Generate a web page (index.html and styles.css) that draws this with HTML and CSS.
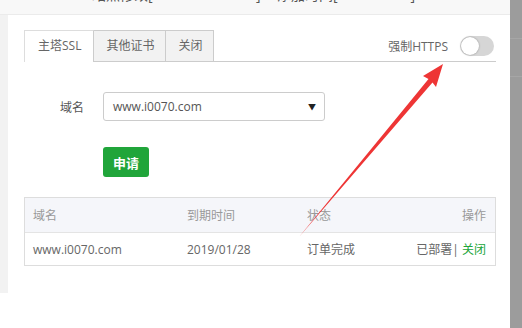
FILE: index.html
```html
<!DOCTYPE html>
<html lang="zh-cn">

<head>
   <meta charset="UTF-8">
   <title>站点修改</title>
   <link rel="stylesheet" href="styles.css">
</head>

<body>
   <div class="janela">
      <div class="conteudo">
         <div class="titulo"><span>站点修改[www.i0070.com] -- 添加时间[2019-01-01]</span></div>
         <div class="corpo">
            <div class="lateral"></div>
            <div class="painel">
               <div class="abas">
                  <span class="aba ativa">主塔SSL</span>
                  <span class="aba">其他证书</span>
                  <span class="aba">关闭</span>
                  <div class="forcar">
                     <span>强制HTTPS</span>
                     <span class="chave"><i></i></span>
                  </div>
               </div>

               <div class="linha">
                  <label>域名</label>
                  <div class="seletor">
                     <span>www.i0070.com</span>
                     <b>▼</b>
                  </div>
               </div>

               <button class="aplicar">申请</button>

               <div class="tabela">
                  <div class="cab">
                     <span>域名</span>
                     <span>到期时间</span>
                     <span>状态</span>
                     <span class="dir">操作</span>
                  </div>
                  <div class="reg">
                     <span>www.i0070.com</span>
                     <span>2019/01/28</span>
                     <span>订单完成</span>
                     <span class="dir">已部署| <em>关闭</em></span>
                  </div>
               </div>
            </div>
         </div>
      </div>
      <div class="rolagem"></div>
   </div>

   <svg class="seta" width="522" height="328" viewBox="0 0 522 328">
      <polygon points="299,237 432.5,82.5 436,87 443,64 423,76 428.5,79" fill="#ee3535" />
   </svg>
</body>

</html>
```

FILE: styles.css
```css
html,
body {
   margin: 0;
   height: 100%;
   font-family: 'Open Sans', 'Noto Sans CJK SC', sans-serif;
   font-size: 12px;
   color: #666;
   background: #fff;
}

.janela {
   display: flex;
   width: 522px;
   height: 328px;
   overflow: hidden;
}

.conteudo {
   width: 510px;
   display: flex;
   flex-direction: column;
}

.titulo {
   height: 14px;
   background: #f8f8f8;
   border-bottom: 1px solid #ebebeb;
   overflow: hidden;
   color: #555;
   font-size: 14px;
}

.titulo span {
   display: block;
   margin: -15px 0 0 92px;
   line-height: 20px;
}

.corpo {
   display: flex;
   height: 278px;
}

.lateral {
   width: 10px;
   background: #f2f2f2;
}

.painel {
   flex: 1;
   padding: 15px 14px 0 16px;
}

.abas {
   display: flex;
   align-items: flex-end;
   border-bottom: 1px solid #ccc;
   height: 31px;
}

.aba {
   height: 30px;
   line-height: 30px;
   padding: 0 11px 0 12px;
   border: 1px solid #ccc;
   border-bottom: none;
   border-left: none;
   background: #f2f2f2;
}

.aba:first-child {
   border-left: 1px solid #ddd;
   border-top-color: #ddd;
   background: #fff;
   height: 31px;
   margin-bottom: -1px;
   padding: 0 12px 0 13px;
}

.forcar {
   margin-left: auto;
   align-self: center;
   display: flex;
   align-items: center;
   gap: 12px;
   padding-right: 2px;
}

.chave {
   width: 34px;
   height: 20px;
   border-radius: 10px;
   background: #d6d6d6;
   display: flex;
   align-items: center;
   padding-left: 1px;
   box-sizing: border-box;
}

.chave i {
   width: 18px;
   height: 18px;
   border-radius: 50%;
   background: #fff;
   box-shadow: 0 0 2px rgba(0, 0, 0, 0.35);
}

.linha {
   display: flex;
   align-items: center;
   margin-top: 30px;
}

.linha label {
   width: 60px;
   text-align: right;
   margin-right: 19px;
   font-size: 12px;
   color: #555;
}

.seletor {
   width: 222px;
   height: 29px;
   box-sizing: border-box;
   border: 1px solid #ccc;
   border-radius: 3px;
   display: flex;
   align-items: center;
   justify-content: space-between;
   padding: 0 8px 0 9px;
   font-size: 12px;
   color: #555;
}

.seletor b {
   font-size: 8px;
   color: #222;
   font-weight: normal;
}

.aplicar {
   display: block;
   margin: 26px 0 0 79px;
   width: 46px;
   height: 30px;
   border: none;
   border-radius: 3px;
   background: #20a53a;
   color: #fff;
   font-family: 'Open Sans', 'Noto Sans CJK SC', sans-serif;
   font-size: 13px;
   font-weight: bold;
}

.tabela {
   margin-top: 20px;
   width: 470px;
   border: 1px solid #ddd;
}

.cab,
.reg {
   display: grid;
   grid-template-columns: 154px 120px 1fr auto;
   align-items: center;
   padding: 0 9px 0 8px;
}

.cab {
   height: 34px;
   background: #f5f6fa;
   border-bottom: 1px solid #e4e4e4;
   color: #999;
}

.reg {
   height: 32px;
   color: #666;
}

.reg em {
   font-style: normal;
   color: #20a53a;
}

.rolagem {
   width: 12px;
   height: 328px;
   background: linear-gradient(#9c9c9c 38px, #b0b0b0 38px, #9c9c9c 39px, #9c9c9c 76px, #b0b0b0 76px, #9c9c9c 77px);
}

.seta {
   position: absolute;
   left: 0;
   top: 0;
   pointer-events: none;
}
```
